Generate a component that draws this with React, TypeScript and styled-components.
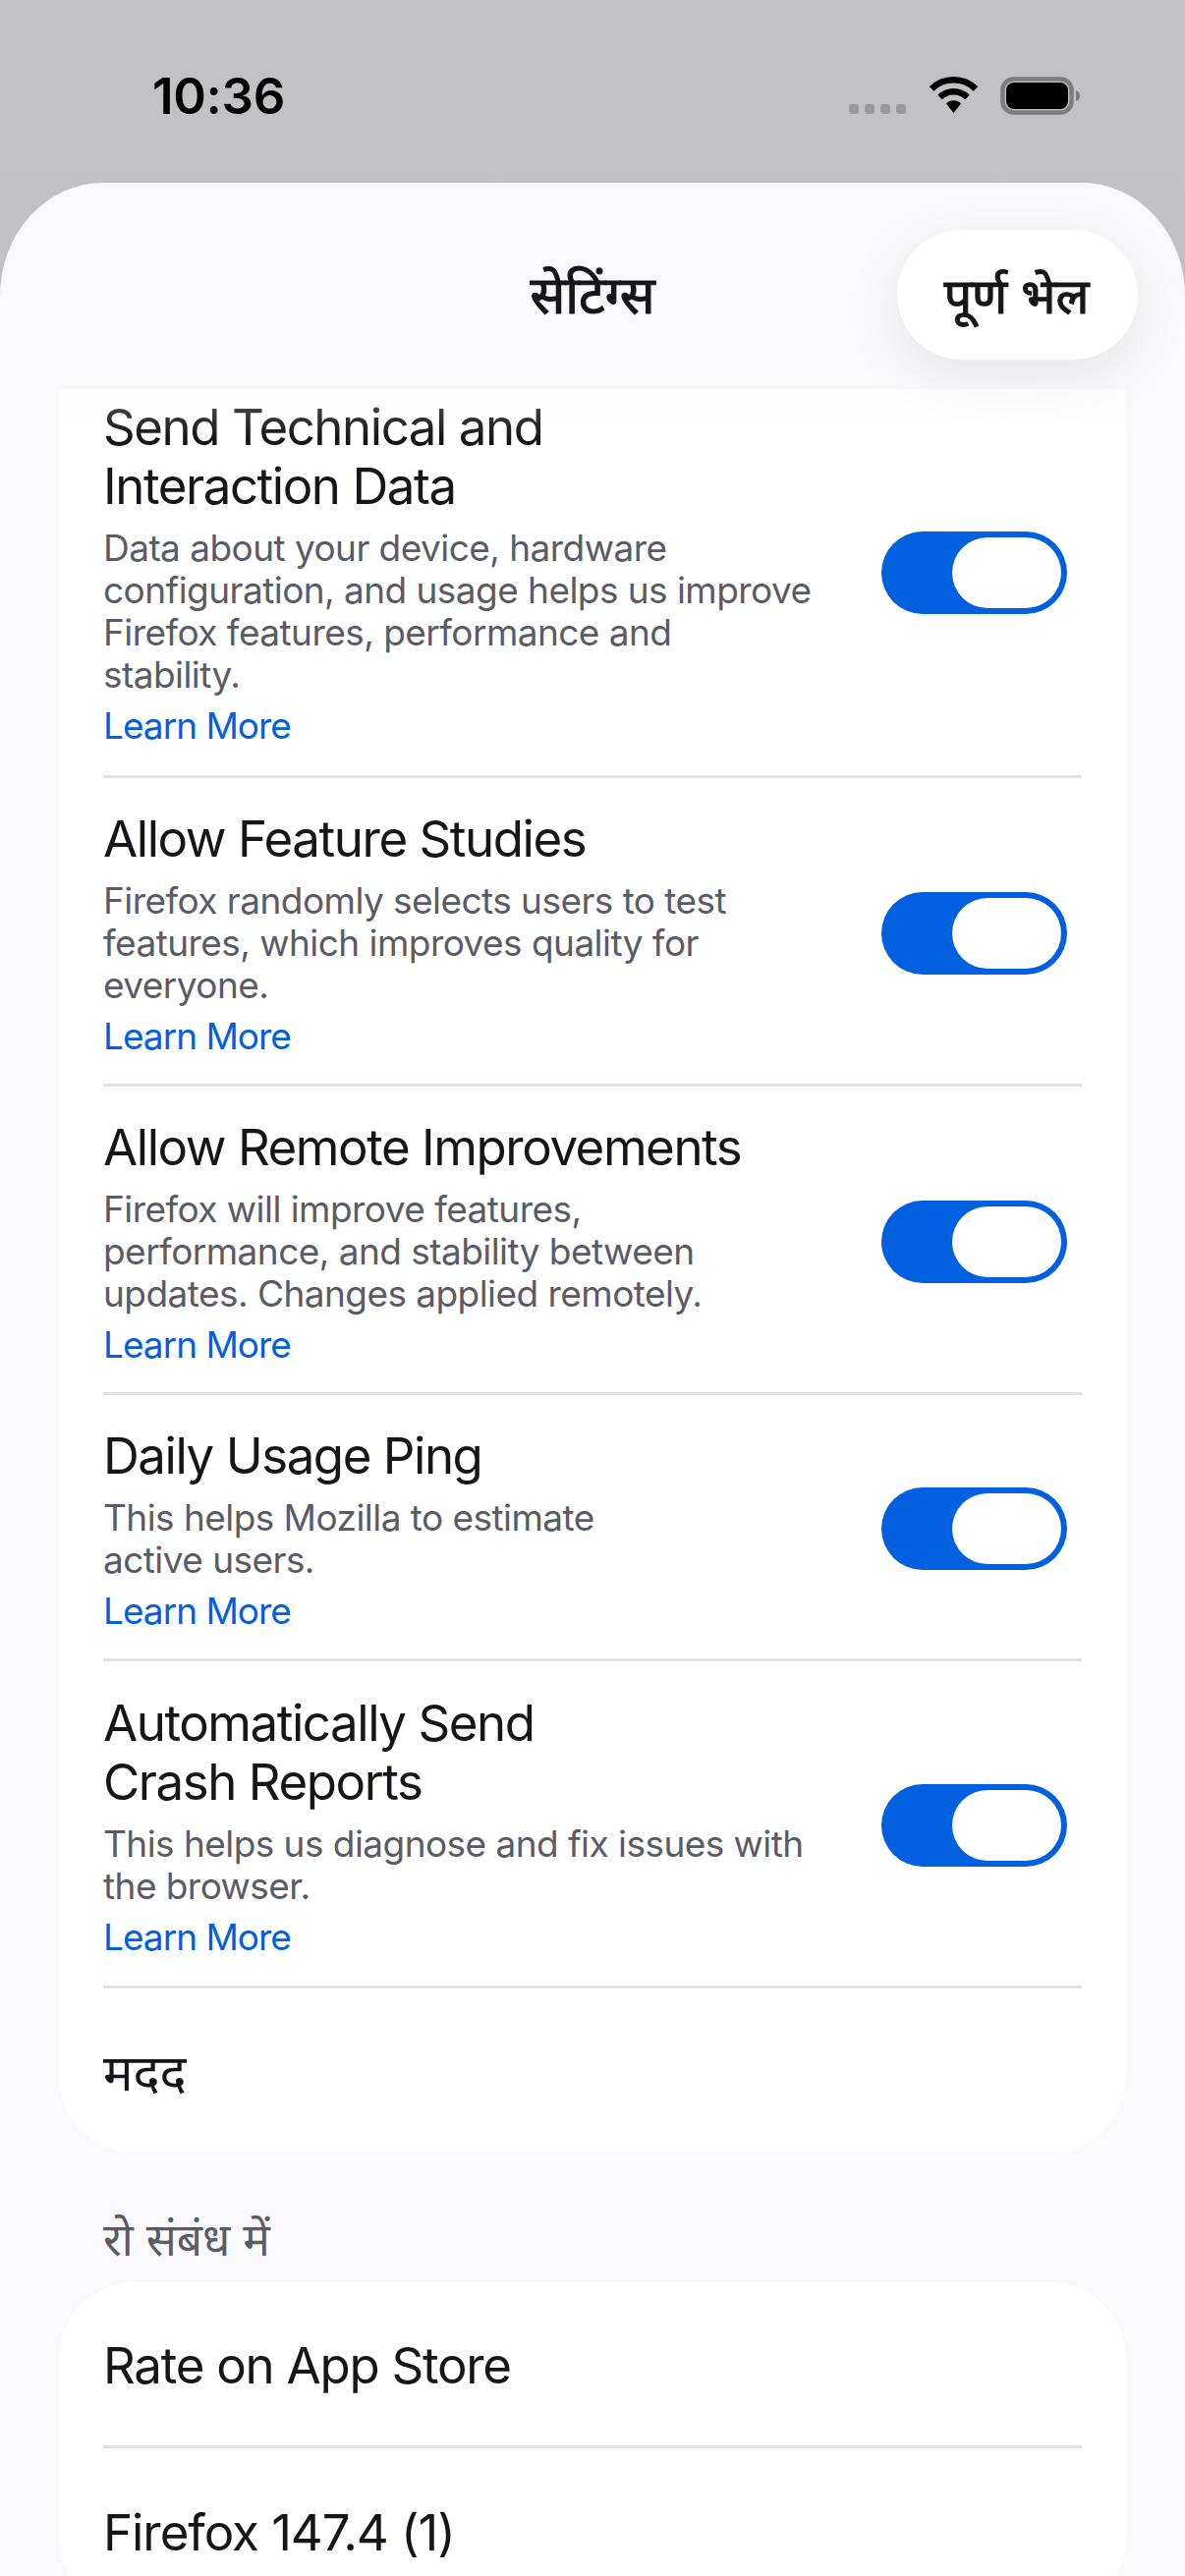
import React from "react";
import styled, { createGlobalStyle } from "styled-components";

const Global = createGlobalStyle`
  html, body { margin: 0; padding: 0; background: #f9f9fb; }
  * { box-sizing: border-box; }
  body { font-family: Inter, "Noto Sans", "DejaVu Sans", sans-serif; }
`;

const Page = styled.div`
  width: 1206px;
  height: 2622px;
  overflow: hidden;
  display: flex;
  flex-direction: column;
  background: linear-gradient(#c3c3c5, #c2c2c4 100px, #bcbcbe);
`;

const StatusBar = styled.div`
  height: 186px;
  flex: none;
  display: flex;
  justify-content: space-between;
  padding: 70px 104px 0 155px;
`;

const Time = styled.div`
  font-size: 51px;
  line-height: 56px;
  font-weight: 600;
  letter-spacing: -0.3px;
  color: #000;
`;

const StatusIcons = styled.div`
  display: flex;
  align-items: flex-start;
  padding-top: 8px;
`;

const Dots = styled.div`
  display: flex;
  gap: 6px;
  margin: 28px 23px 0 0;
`;

const Dot = styled.span`
  width: 10px;
  height: 10px;
  border-radius: 3px;
  background: #9a9a9c;
`;

const WifiIcon = styled.svg`
  margin-right: 22px;
`;

const Sheet = styled.div`
  flex: 1;
  min-height: 0;
  display: flex;
  flex-direction: column;
  background: #f9f9fb;
  border-radius: 105px 105px 0 0 / 115px 115px 0 0;
  overflow: hidden;
`;

const Nav = styled.header`
  height: 210px;
  flex: none;
  position: relative;
  z-index: 1;
  display: flex;
  align-items: center;
  justify-content: center;
  padding-top: 14px;

  &::after {
    content: "";
    position: absolute;
    left: 0;
    right: 0;
    top: 100%;
    height: 50px;
    background: linear-gradient(rgba(249, 249, 251, 0.3), rgba(249, 249, 251, 0));
  }
`;

const NavTitle = styled.h1`
  margin: 0;
  font-size: 53px;
  font-weight: 400;
  -webkit-text-stroke: 1.2px #16161a;
  color: #16161a;
`;

const DoneButton = styled.button`
  position: absolute;
  left: 913px;
  top: 48px;
  width: 245px;
  height: 132px;
  border: 0;
  padding: 0 2px 0 0;
  border-radius: 66px;
  background: #fff;
  box-shadow: 0 16px 60px rgba(0, 0, 0, 0.08);
  font: 400 50px Inter, "Noto Sans", sans-serif;
  -webkit-text-stroke: 1.2px #16161a;
  color: #16161a;
`;

const Scroll = styled.main`
  flex: 1;
  min-height: 0;
  overflow: hidden;
`;

const ScrollContent = styled.div`
  margin-top: -118px;
  padding: 0 60px;
`;

const Card = styled.section<{ $scrolledOff?: number }>`
  background: #fff;
  border-radius: 78px;
  padding: ${(p) => p.$scrolledOff ?? 0}px 45px 0;
`;

const Row = styled.div<{ $height: number; $top?: number; $bottom?: number }>`
  height: ${(p) => p.$height}px;
  padding: ${(p) => p.$top ?? 0}px 0 ${(p) => p.$bottom ?? 0}px;
  display: flex;
  align-items: center;
  justify-content: space-between;
  border-bottom: 3px solid #e1e1e6;
  &:last-child { border-bottom: 0; }
`;

const RowText = styled.div`
  display: flex;
  flex-direction: column;
`;

const Title = styled.div<{ $tracking?: number }>`
  font-size: 51px;
  line-height: 60px;
  letter-spacing: ${(p) => p.$tracking ?? -1.45}px;
  color: #16161a;
`;

const Description = styled.div`
  font-size: 37px;
  line-height: 43px;
  letter-spacing: -0.55px;
  margin-top: 11px;
  color: #5b5b66;
`;

const LearnMore = styled.a`
  font-size: 37px;
  line-height: 43px;
  letter-spacing: -1px;
  margin-top: 9px;
  color: #0060df;
`;

const Toggle = styled.div`
  flex: none;
  width: 189px;
  height: 84px;
  margin-right: 15px;
  padding: 6px;
  border-radius: 42px;
  background: #0060df;
  display: flex;
  justify-content: flex-end;
`;

const Thumb = styled.div`
  width: 111px;
  height: 72px;
  border-radius: 36px;
  background: #fff;
`;

const SectionLabel = styled.h2`
  margin: 65px 0 21px 45px;
  font-size: 46px;
  line-height: 46px;
  font-weight: 400;
  color: #5b5b66;
`;

const items = [
  { h: 414, top: 0, bottom: 2, t: ["Send Technical and", "Interaction Data"], d: ["Data about your device, hardware", "configuration, and usage helps us improve", "Firefox features, performance and", "stability."] },
  { h: 314, top: 5, bottom: 0, t: ["Allow Feature Studies"], d: ["Firefox randomly selects users to test", "features, which improves quality for", "everyone."] },
  { h: 314, top: 5, bottom: 0, t: ["Allow Remote Improvements"], d: ["Firefox will improve features,", "performance, and stability between", "updates. Changes applied remotely."] },
  { h: 271, top: 4, bottom: 0, t: ["Daily Usage Ping"], d: ["This helps Mozilla to estimate", "active users."] },
  { h: 333, top: 4, bottom: 0, t: ["Automatically Send", "Crash Reports"], d: ["This helps us diagnose and fix issues with", "the browser."] },
];

const lines = (l: string[]) => l.map((s, i) => <React.Fragment key={i}>{i > 0 && <br />}{s}</React.Fragment>);

export default function App() {
  return (
    <Page>
      <Global />
      <StatusBar>
        <Time>10:36</Time>
        <StatusIcons>
          <Dots><Dot /><Dot /><Dot /><Dot /></Dots>
          <WifiIcon width="51" height="38" viewBox="0 0 51 38">
            <path d="M3 12.500a32 32 0 0 1 45 0" fill="none" stroke="#000" strokeWidth="6.500" />
            <path d="M11.500 21a20 20 0 0 1 28 0" fill="none" stroke="#000" strokeWidth="6.500" />
            <path d="M18 27.500a10.500 10.500 0 0 1 15 0L25.500 37z" fill="#000" />
          </WifiIcon>
          <svg width="84" height="40" viewBox="0 0 84 40">
            <rect x="2.500" y="2.500" width="70" height="34" rx="11" fill="none" stroke="#7d7d7f" strokeWidth="4.500" />
            <rect x="6" y="6" width="63" height="27" rx="8" fill="#000" />
            <path d="M77 14c3 1 4 3 4 5.500s-1 4.500-4 5.500z" fill="#7d7d7f" />
          </svg>
        </StatusIcons>
      </StatusBar>
      <Sheet>
        <Nav>
          <NavTitle>सेटिंग्स</NavTitle>
          <DoneButton>पूर्ण भेल</DoneButton>
        </Nav>
        <Scroll>
          <ScrollContent>
            <Card $scrolledOff={100}>
              {items.map((it, i) => (
                <Row key={i} $height={it.h} $top={it.top} $bottom={it.bottom}>
                  <RowText>
                    <Title>{lines(it.t)}</Title>
                    <Description>{lines(it.d)}</Description>
                    <LearnMore>Learn More</LearnMore>
                  </RowText>
                  <Toggle><Thumb /></Toggle>
                </Row>
              ))}
              <Row $height={167} $top={5}><Title $tracking={0}>मदद</Title></Row>
            </Card>
            <SectionLabel>रो संबंध में</SectionLabel>
            <Card>
              <Row $height={169} $top={3}><Title $tracking={-1.25}>Rate on App Store</Title></Row>
              <Row $height={168} $top={3}><Title $tracking={-1.05}>Firefox 147.4 (1)</Title></Row>
            </Card>
          </ScrollContent>
        </Scroll>
      </Sheet>
    </Page>
  );
}
